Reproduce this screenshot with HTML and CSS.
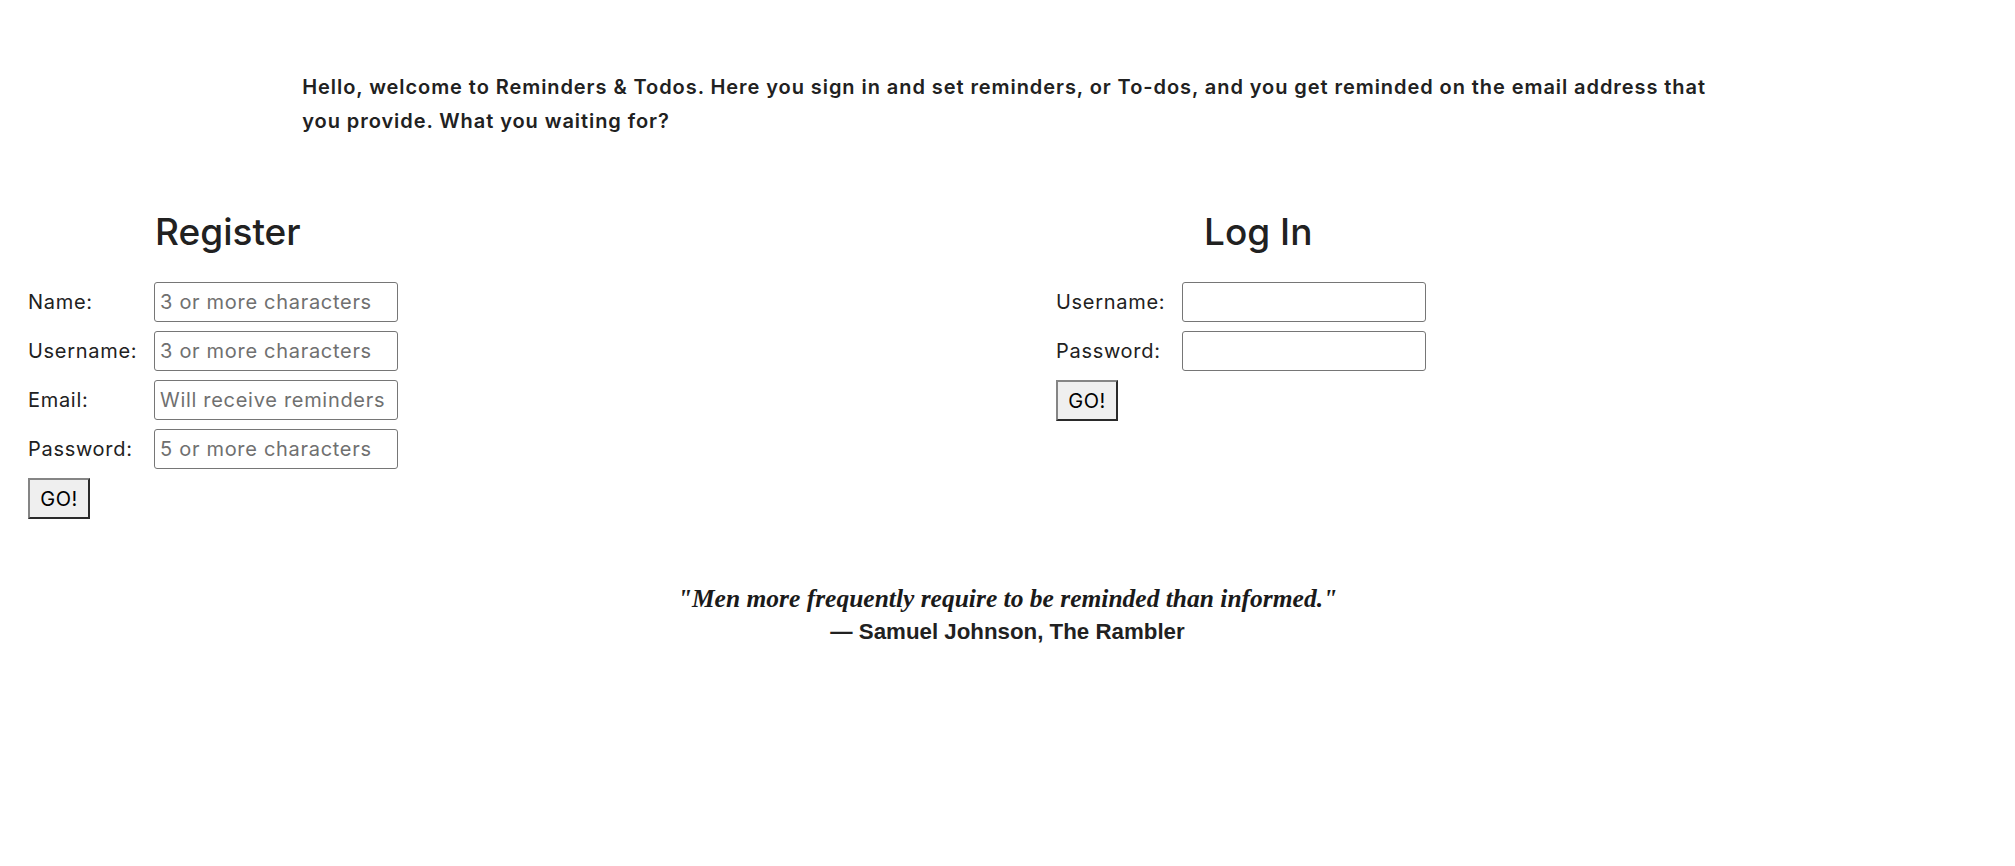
FILE: index.html
```html
<!DOCTYPE html>
<html lang="en">
<head>
<meta charset="utf-8">
<title>Reminders &amp; Todos</title>
<link rel="stylesheet" href="styles.css">
</head>
<body>
<main class="page">
  <p class="intro">Hello, welcome to Reminders &amp; Todos. Here you sign in and set reminders, or To-dos, and you get reminded on the email address that you provide. What you waiting for?</p>

  <div class="forms">
    <section class="panel register">
      <h2 class="panel-title">Register</h2>
      <form class="form">
        <label class="label" for="r-name">Name:</label>
        <input class="field" id="r-name" type="text" placeholder="3 or more characters">
        <label class="label" for="r-user">Username:</label>
        <input class="field" id="r-user" type="text" placeholder="3 or more characters">
        <label class="label" for="r-email">Email:</label>
        <input class="field" id="r-email" type="email" placeholder="Will receive reminders">
        <label class="label" for="r-pass">Password:</label>
        <input class="field" id="r-pass" type="password" placeholder="5 or more characters">
        <button class="go" type="button">GO!</button>
      </form>
    </section>

    <section class="panel login">
      <h2 class="panel-title">Log In</h2>
      <form class="form">
        <label class="label" for="l-user">Username:</label>
        <input class="field" id="l-user" type="text">
        <label class="label" for="l-pass">Password:</label>
        <input class="field" id="l-pass" type="password">
        <button class="go" type="button">GO!</button>
      </form>
    </section>
  </div>

  <blockquote class="quote">
    <p class="quote-text">"Men more frequently require to be reminded than informed."</p>
    <p class="quote-author">— Samuel Johnson, The Rambler</p>
  </blockquote>
</main>
</body>
</html>
```
FILE: styles.css
```css
html, body {
  margin: 0;
  padding: 0;
  background: #ffffff;
}

body {
  font-family: Inter, "Noto Sans", "Liberation Sans", sans-serif;
  color: #212121;
  font-size: 20px;
}

.page {
  padding-top: 70px;
}

.intro {
  width: 70%;
  margin: 0 auto;
  font-size: 20px;
  font-weight: 600;
  line-height: 34px;
  letter-spacing: 0.93px;
}

.forms {
  display: grid;
  grid-template-columns: 1028px 1fr;
  padding: 0 28px;
  margin-top: 72px;
}

.panel-title {
  margin: 0 0 28px 0;
  font-size: 37px;
  font-weight: 500;
  line-height: 44px;
}

.register .panel-title {
  padding-left: 127px;
}

.login .panel-title {
  padding-left: 148px;
}

.form {
  display: grid;
  grid-template-columns: 126px 244px;
  row-gap: 9px;
  align-items: center;
}

.label {
  font-size: 20px;
  line-height: 24px;
  letter-spacing: 0.7px;
}

.field {
  box-sizing: border-box;
  width: 244px;
  height: 40px;
  margin: 0;
  padding: 0 5px;
  border: 1px solid #767676;
  border-radius: 3px;
  font-family: Inter, "Noto Sans", "Liberation Sans", sans-serif;
  font-size: 20px;
  letter-spacing: 0.7px;
  color: #111;
  background: #fff;
}

.field::placeholder {
  color: #707070;
}

.go {
  grid-column: 1;
  justify-self: start;
  box-sizing: border-box;
  width: 62px;
  height: 41px;
  margin: 0;
  padding: 0;
  background: #efefef;
  border-style: solid;
  border-width: 2px;
  border-color: #858585 #2a2a2a #2a2a2a #858585;
  font-family: Inter, "Noto Sans", "Liberation Sans", sans-serif;
  font-size: 20px;
  letter-spacing: 0.5px;
  color: #000;
}

.quote {
  margin: 64px 0 0 0;
  text-align: center;
}

.quote-text {
  margin: 0;
  font-family: "Liberation Serif", "DejaVu Serif", serif;
  font-style: italic;
  font-weight: 700;
  font-size: 25.5px;
  line-height: 32px;
  color: #1a1a1a;
}

.quote-author {
  margin: 0;
  font-family: "Liberation Sans", Arial, sans-serif;
  font-weight: 700;
  font-size: 22.3px;
  line-height: 34px;
}
```
